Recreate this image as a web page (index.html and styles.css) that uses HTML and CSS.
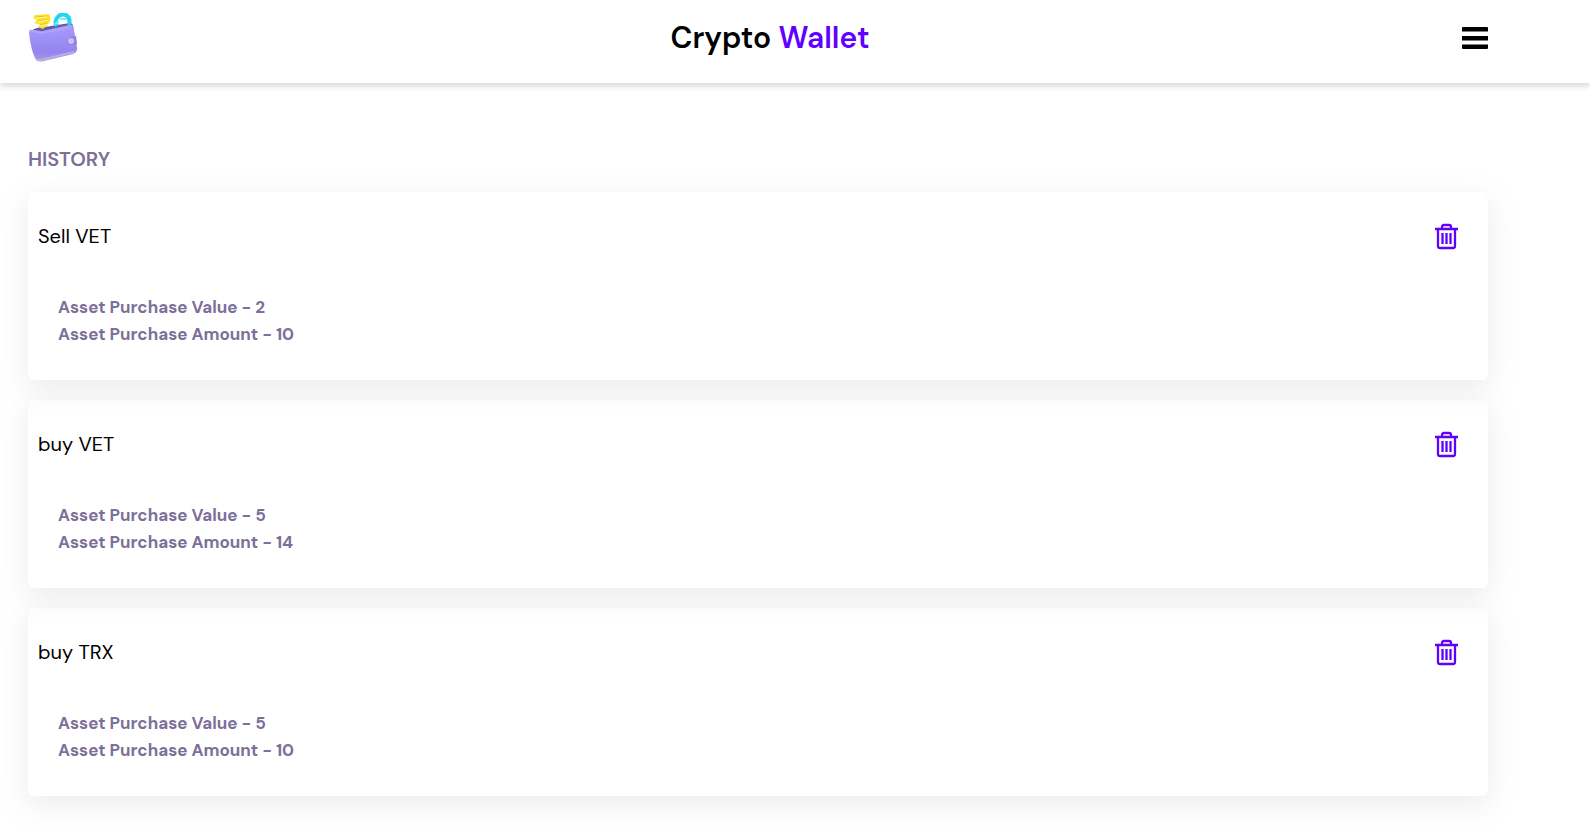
FILE: index.html
```
<!DOCTYPE html>
<html lang="en">
<head>
    <meta charset="UTF-8">
    <meta name="viewport" content="width=device-width, initial-scale=1.0">
    <title>Crypto Wallet</title>
    <link rel="stylesheet" href="styles.css">
</head>
<body>
<!-- shared icons -->
<svg class="sprite" aria-hidden="true">
    <symbol id="trash" viewBox="0 0 24 28">
        <path d="M1 7h23M4 7v17q0 2 2 2h13q2 0 2-2V7M8 7V5q0-2 2-2h5q2 0 2 2v2" fill="none" stroke="currentColor" stroke-width="2.300"/>
        <path d="M8.500 11v11M12.500 11v11M16.500 11v11" fill="none" stroke="currentColor" stroke-width="2.300"/>
    </symbol>
</svg>

<header class="header">
    <a class="logo" href="#" aria-label="Home">
        <svg width="50" height="50" viewBox="0 0 50 50">
            <defs>
                <linearGradient id="walletBody" x1="0" y1="0" x2="0" y2="1">
                    <stop offset="0" stop-color="#a99aff"/>
                    <stop offset="0.75" stop-color="#9485ee"/>
                    <stop offset="1" stop-color="#a99fd8"/>
                </linearGradient>
            </defs>
            <path d="M3 18Q8 14 17 14L42 10Q46 10 45 17L12 21Z" fill="#655a9f"/>
            <path d="M7 2L21 1Q24 6 21 10Q19 14 14 16L10 13L13 12L6 10L9 7L5 5Z" fill="#ffe32e"/>
            <path d="M8 4L19 3M10 8L20 6M12 12L20 10" stroke="#e8c600" stroke-width="1"/>
            <path d="M8 5L19 4M10 9L20 7M12 13L20 11" stroke="#fff8ae" stroke-width="1"/>
            <path d="M29 13Q26 9 29 5Q32 0 38 2Q43 5 41 12" fill="none" stroke="#22d6ef" stroke-width="4"/>
            <path d="M32 6L39 6M31 9L27 11" stroke="#79edfa" stroke-width="2"/>
            <path d="M1 20Q1 16 5 17L14 18L41 12Q46 11 46 17L49 34Q50 39 45 41L16 48Q9 50 7 45Q3 37 1 20Z" fill="url(#walletBody)"/>
            <path d="M2 19Q5 17 14 20L43 14" fill="none" stroke="#b0a3ff" stroke-width="2"/>
            <path d="M9 46Q11 48 17 46L46 39" fill="none" stroke="#b7afe6" stroke-width="2"/>
            <path d="M48 23L42 24Q38 26 39 30Q40 33 44 32L49 31Z" fill="#9080e4"/>
            <circle cx="43" cy="28" r="3" fill="#c9c0ff"/>
        </svg>
    </a>
    <h1 class="title">Crypto <span class="accent">Wallet</span></h1>
    <button class="icon-button menu-button" type="button" aria-label="Menu">
        <svg width="26" height="24" viewBox="0 0 26 24">
            <path d="M1 1h24a1 1 0 0 1 1 1v3.500H0V2a1 1 0 0 1 1-1zM0 10h26v4.500H0zM0 18.500h26V22a1 1 0 0 1-1 1H1a1 1 0 0 1-1-1z"/>
        </svg>
    </button>
</header>

<main class="history">
    <h2 class="history-title">HISTORY</h2>
    <div class="card-list">
        <article class="card">
            <div class="card-top">
                <h3 class="card-title">Sell VET</h3>
                <button class="icon-button delete-button" type="button" aria-label="Delete Sell VET"><svg width="24" height="28"><use href="#trash"/></svg></button>
            </div>
            <div class="card-details">
                <p>Asset Purchase Value - 2</p>
                <p>Asset Purchase Amount - 10</p>
            </div>
        </article>
        <article class="card">
            <div class="card-top">
                <h3 class="card-title">buy VET</h3>
                <button class="icon-button delete-button" type="button" aria-label="Delete buy VET"><svg width="24" height="28"><use href="#trash"/></svg></button>
            </div>
            <div class="card-details">
                <p>Asset Purchase Value - 5</p>
                <p>Asset Purchase Amount - 14</p>
            </div>
        </article>
        <article class="card">
            <div class="card-top">
                <h3 class="card-title">buy TRX</h3>
                <button class="icon-button delete-button" type="button" aria-label="Delete buy TRX"><svg width="24" height="28"><use href="#trash"/></svg></button>
            </div>
            <div class="card-details">
                <p>Asset Purchase Value - 5</p>
                <p>Asset Purchase Amount - 10</p>
            </div>
        </article>
    </div>
</main>
</body>
</html>
```
FILE: styles.css
```
* {
    box-sizing: border-box;
    margin: 0;
    padding: 0;
}
body {
    font-family: 'DM Sans', Inter, sans-serif;
    background-color: #fff;
    color: #000;
}
.sprite {
    display: none;
}
.header {
    display: flex;
    justify-content: space-between;
    align-items: center;
    padding: 13px 102px 20px 28px;
    background-color: #fff;
    box-shadow: 0 3px 6px rgba(0, 0, 0, 0.16);
}
.logo svg,
.icon-button svg {
    display: block;
}
.title {
    font-size: 30px;
    font-weight: 600;
    line-height: 50px;
}
.accent {
    color: #6200ff;
}
.icon-button {
    border: none;
    background: none;
    color: #000;
    cursor: pointer;
}
.history {
    padding: 62px 102px 44px 28px;
}
.history-title {
    margin-bottom: 19px;
    font-size: 20px;
    font-weight: 600;
    line-height: 28px;
    color: #7c6f98;
}
.card-list {
    display: flex;
    flex-direction: column;
    gap: 20px;
}
.card {
    padding: 30px 30px 32px 10px;
    border-radius: 6px;
    box-shadow: 0 8px 30px rgba(149, 157, 165, 0.2);
}
.card-top {
    display: flex;
    justify-content: space-between;
    align-items: center;
    margin-bottom: 44px;
}
.card-title {
    font-size: 20px;
    font-weight: 400;
    line-height: 28px;
}
.delete-button {
    color: #6200ff;
}
.card-details {
    padding-left: 20px;
    font-size: 17px;
    font-weight: 700;
    line-height: 27px;
    color: #7c6f98;
}
@media (max-width: 600px) {
    .header,
    .history {
        padding-right: 28px;
    }
    .title {
        font-size: 24px;
    }
}
```
